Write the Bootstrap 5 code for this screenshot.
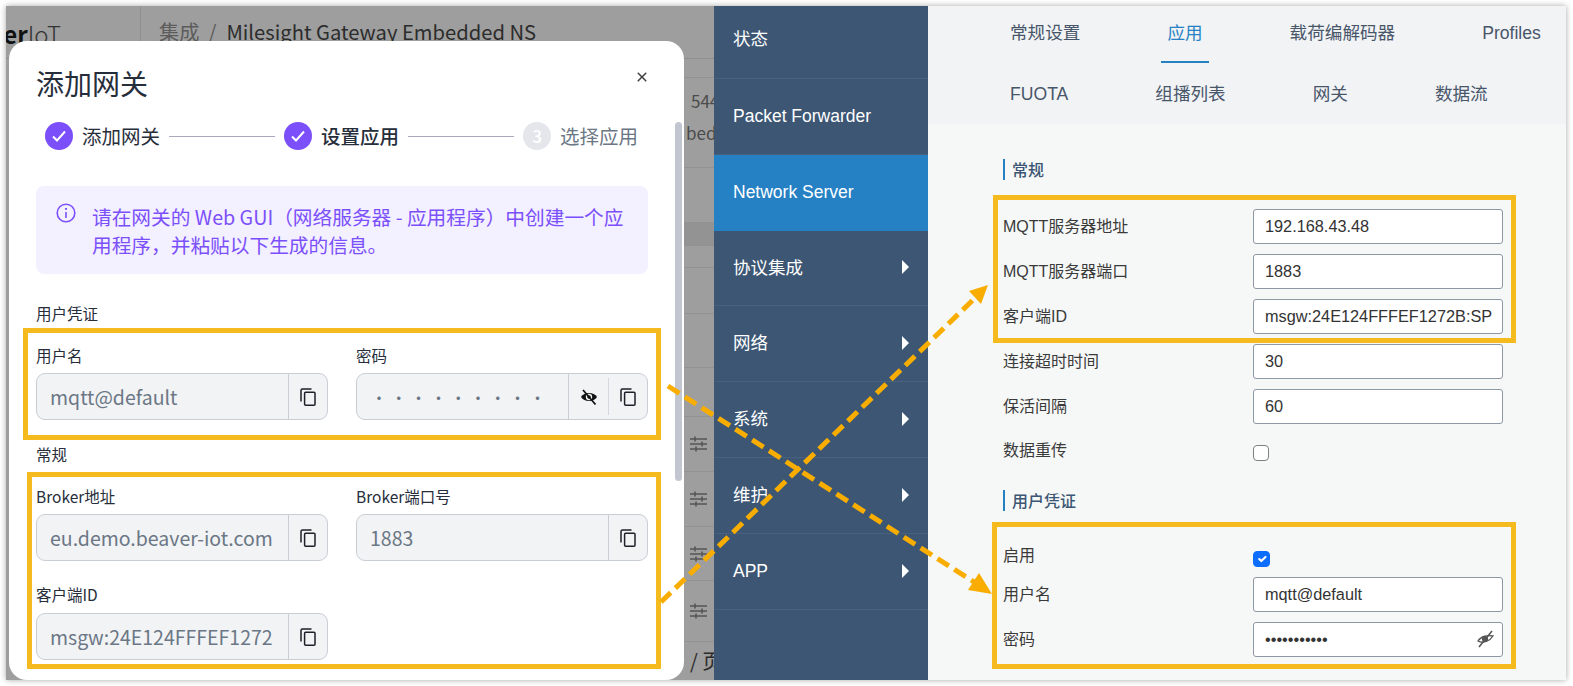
<!DOCTYPE html>
<html lang="zh-CN">
<head>
    <meta charset="UTF-8">
    <meta name="viewport" content="width=device-width, initial-scale=1.0">
    <title>Milesight Gateway Embedded NS</title>
    <link rel="stylesheet" href="https://cdn.jsdelivr.net/npm/bootstrap@5.3.0/dist/css/bootstrap.min.css">
    <style>
        html, body { height: 100%; }
        body {
            background: #fff;
            overflow: hidden;
            font-family: "Noto Sans CJK SC", sans-serif;
        }
        .shot {
            position: relative;
            width: 1560px;
            height: 674px;
            margin: 6px 0 0 6px;
            box-shadow: 0 0 6px rgba(0, 0, 0, 0.35);
        }
        .arrow-layer {
            position: absolute;
            top: 0;
            left: 0;
            z-index: 5;
            pointer-events: none;
        }

        /* left half: the dimmed page behind the dialog */
        .pane-left {
            position: relative;
            width: 708px;
            height: 674px;
            flex: none;
            overflow: hidden;
            background: #9e9e9e;
        }
        .back-top { height: 53px; border-bottom: 1px solid #8f8f8f; }
        .back-logo {
            width: 135px;
            height: 53px;
            padding: 12px 79px 0 0;
            border-right: 1px solid #8f8f8f;
            overflow: hidden;
            white-space: nowrap;
            font-size: 24px;
            line-height: 32px;
            font-weight: 300;
            color: #333;
        }
        .back-logo b { color: #111; font-weight: 700; }
        .back-crumb {
            padding: 11px 0 0 18px;
            font-size: 20.2px;
            line-height: 30px;
            color: #2c2c2c;
        }
        .back-crumb span { color: #5c5c5c; margin-right: 1px; }
        .back-rows {
            display: grid;
            grid-template-rows: 19px 90px 55px 23px 22px 46px 54px 49px 55px 55px 54px 61px 38px;
            margin-left: 678px;
            width: 30px;
            font-size: 17px;
            color: #4b4b4b;
            white-space: nowrap;
        }
        .back-rows > div {
            border-bottom: 1px solid #929292;
            overflow: hidden;
            display: flex;
            align-items: center;
            padding-left: 6px;
        }
        .back-rows > .back-band { background: #939393; }
        .back-rows > .back-num { display: block; padding: 7px 0 0 7px; line-height: 32px; }
        .back-num span { margin-left: -5px; }
        .back-rows > .back-last { border: 0; font-size: 20px; color: #2c2c2c; }

        /* dialog */
        .dlg {
            position: absolute;
            top: 35px;
            left: 3px;
            width: 675px;
            height: 639px;
            border: 0;
            border-radius: 18px;
            overflow: hidden;
            background: #fff;
            color: #272e3b;
        }
        .dlg-head { padding: 23px 36px 0 27px; }
        .dlg-title { font-size: 28px; line-height: 38px; font-weight: 400; margin: 0; color: #272e3b; }
        .dlg-close { width: 12px; height: 12px; padding: 0; margin: 7px 0 0 0; background-size: 12px; opacity: .75; }
        .dlg-bar {
            position: absolute;
            top: 81px;
            right: 2px;
            width: 7px;
            height: 359px;
            border-radius: 4px;
            background: #c2c6d0;
        }
        .dlg-body { padding: 0 0 0 27px; width: 639px; }
        .steps { margin: 20px 0 36px 9px; height: 28px; width: 593px; font-size: 19.5px; line-height: 28px; }
        .step-dot {
            width: 28px;
            height: 28px;
            flex: none;
            border-radius: 50%;
            background: #7b4ffa;
        }
        .step-dot-off {
            background: #e5e6eb;
            color: #fff;
            font-size: 17px;
            font-weight: 500;
        }
        .step-text { margin-left: 9px; white-space: nowrap; }
        .step-text-now { font-weight: 500; }
        .step-text-off { color: #6b7785; }
        .step-line { flex: 1 1 auto; height: 1px; margin: 0 9px; background: #a9a9bd; }
        .info-box {
            display: flex;
            gap: 16px;
            width: 612px;
            margin: 0;
            padding: 17px 20px 15px;
            border: 0;
            border-radius: 8px;
            background: #f3f0ff;
            color: #7b4ffa;
            font-size: 19.7px;
            line-height: 28px;
        }
        .info-box svg { flex: none; }
        .group-title { font-size: 15.5px; line-height: 22px; color: #272e3b; margin: 0; }
        .hl { border: 5px solid #f5ba1e; }
        .hl-one { width: 638px; margin: 4px 0 3px -13px; padding: 11px 8px 15px 8px; }
        .hl-two { width: 634px; margin: 7px 0 0 -9px; padding: 8px 8px 4px 4px; }
        .cred-row { --bs-gutter-x: 28px; --bs-gutter-y: 0; }
        .fld-label { display: block; font-size: 15.5px; line-height: 22px; margin: 0 0 7px; color: #272e3b; }
        .fld-label-next { margin: 22px 0 8px; }
        .fld-group { height: 47px; }
        .fld-group .form-control {
            height: 47px;
            padding: 0 4px 0 13px;
            font-family: inherit;
            font-size: 19.5px;
            color: #6b7785;
            background: #f2f3f5;
            border-color: #c9cdd4;
            border-radius: 9px;
            box-shadow: none;
        }
        .fld-group .dots { letter-spacing: 3.8px; padding-left: 14px; font-size: 16px; }
        .fld-group .btn {
            width: 40px;
            padding: 0;
            background: #f2f3f5;
            border-color: #c9cdd4;
            border-radius: 9px;
            display: flex;
            align-items: center;
            justify-content: center;
        }
        .fld-group .btn-mid { border-right: 0; border-radius: 0; }
        .fld-group .btn-end { position: relative; border-left: 0; margin-left: 0 !important; }
        .fld-group .btn-end::before {
            content: "";
            position: absolute;
            left: 0;
            top: 4px;
            bottom: 4px;
            width: 1px;
            background: #d4d7dd;
        }

        /* right half: gateway web gui */
        .side {
            --bs-list-group-border-radius: 0;
            width: 214px;
            flex: none;
            border-radius: 0;
            background: #3c5674;
            color: #fff;
            font-family: "Liberation Sans", "Noto Sans CJK SC", sans-serif;
            font-size: 17.5px;
        }
        .side .side-item {
            height: 76px;
            padding: 0 19px;
            border: 0;
            border-bottom: 1px solid #47617f;
            border-radius: 0;
            background: transparent;
            color: #fff;
        }
        .side .side-item:first-child { height: 73px; padding-bottom: 6px; }
        .side .side-item.active { margin-top: 0; background: #2581c3; color: #fff; border-color: #2581c3; }
        .side .side-item.active + .side-item { height: 75px; }
        .side-tri {
            width: 0;
            height: 0;
            margin-bottom: 2px;
            border-left: 7px solid #fff;
            border-top: 7px solid transparent;
            border-bottom: 7px solid transparent;
        }
        .gui {
            flex: 1 1 auto;
            background: #f6f8f7;
            font-family: "Liberation Sans", "Noto Sans CJK SC", sans-serif;
            color: #3a3a3a;
        }
        .tabs-bar {
            height: 118px;
            padding-left: 76px;
            background: #f1f3f5;
            column-gap: 75px;
            row-gap: 4px;
            align-content: flex-start;
        }
        .tab-link {
            height: 57px;
            padding: 0 6px;
            font-size: 17.6px;
            line-height: 55px;
            color: #48566a;
            border-bottom: 2px solid transparent;
        }
        .tab-link.active { color: #2581c3; border-bottom-color: #2581c3; }
        .gui-form { padding: 35px 0 0 75px; }
        .sec-title {
            height: 21px;
            padding-left: 7px;
            border-left: 2px solid #2581c3;
            font-size: 16px;
            line-height: 23px;
            font-weight: 500;
            color: #3c5674;
        }
        .hl-three { width: 523px; margin: 15px 0 1px -10px; padding: 9px 8px 4px 5px; }
        .hl-four { width: 524px; margin: 11px 0 0 -11px; padding: 24px 8px 7px 6px; }
        .gui-row { height: 35px; margin-bottom: 10px; }
        .gui-row-last { margin-bottom: 0; }
        .gui-label { width: 250px; flex: none; font-size: 16px; line-height: 35px; }
        .gui-input {
            position: relative;
            width: 250px;
            height: 35px;
            padding: 0 2px 0 11px;
            font-family: inherit;
            font-size: 16.3px;
            color: #333;
            background: #fff;
            border: 1px solid #8c98a4;
            border-radius: 3px;
        }
        .gui-pass { position: relative; width: 250px; }
        .gui-eye { position: absolute; right: 8px; top: 8px; }
        .gui-check-row { height: 16px; margin: 21px 0 29px; }
        .gui-check-row .gui-label { line-height: 16px; margin-top: -2px; }
        .gui-check {
            width: 16px;
            height: 16px;
            margin: 0;
            border: 1px solid #7f7f7f;
            border-radius: 3px;
        }
        .gui-check-on { margin-bottom: 10px; height: 16px; }
        .gui-check-on .gui-label { line-height: 16px; margin-top: -3px; }
        .gui-check-on .gui-check { width: 17px; }
    </style>
</head>
<body>

    <div class="shot d-flex">

        <div class="pane-left">
            <div class="back-top d-flex">
                <div class="back-logo d-flex justify-content-end"><b>er</b>IoT</div>
                <div class="back-crumb"><span>集成 &nbsp;/&nbsp;</span> Milesight Gateway Embedded NS</div>
            </div>
            <div class="back-rows">
                <div></div>
                <div class="back-num">544<br><span>bedded</span></div>
                <div></div>
                <div class="back-band"></div>
                <div></div>
                <div></div>
                <div></div>
                <div></div>
                <div><svg width="17" height="16" viewBox="0 0 17 16" fill="none" stroke="#555" stroke-width="1.6"><path d="M0 3h17M0 8h17M0 13h17M5 0.5v5M12 5.5v5M6 10.5v5"/></svg></div>
                <div><svg width="17" height="16" viewBox="0 0 17 16" fill="none" stroke="#555" stroke-width="1.6"><path d="M0 3h17M0 8h17M0 13h17M5 0.5v5M12 5.5v5M6 10.5v5"/></svg></div>
                <div><svg width="17" height="16" viewBox="0 0 17 16" fill="none" stroke="#555" stroke-width="1.6"><path d="M0 3h17M0 8h17M0 13h17M5 0.5v5M12 5.5v5M6 10.5v5"/></svg></div>
                <div><svg width="17" height="16" viewBox="0 0 17 16" fill="none" stroke="#555" stroke-width="1.6"><path d="M0 3h17M0 8h17M0 13h17M5 0.5v5M12 5.5v5M6 10.5v5"/></svg></div>
                <div class="back-last">/ 页</div>
            </div>

            <div class="modal-content dlg">
                <div class="dlg-head d-flex justify-content-between align-items-start">
                    <h5 class="dlg-title">添加网关</h5>
                    <button type="button" class="btn-close dlg-close" aria-label="Close"></button>
                </div>
                <div class="dlg-bar"></div>
                <div class="dlg-body">
                    <div class="steps d-flex align-items-center">
                        <span class="step-dot d-flex align-items-center justify-content-center">
                            <svg width="16" height="16" viewBox="0 0 16 16" fill="none" stroke="#fff" stroke-width="2"><path d="M2 8.5l4 4 8-9"/></svg>
                        </span>
                        <span class="step-text">添加网关</span>
                        <span class="step-line"></span>
                        <span class="step-dot d-flex align-items-center justify-content-center">
                            <svg width="16" height="16" viewBox="0 0 16 16" fill="none" stroke="#fff" stroke-width="2"><path d="M2 8.5l4 4 8-9"/></svg>
                        </span>
                        <span class="step-text step-text-now">设置应用</span>
                        <span class="step-line"></span>
                        <span class="step-dot step-dot-off d-flex align-items-center justify-content-center">3</span>
                        <span class="step-text step-text-off">选择应用</span>
                    </div>

                    <div class="alert info-box" role="alert">
                        <svg width="20" height="20" viewBox="0 0 20 20" fill="none" stroke="#7b4ffa" stroke-width="1.6"><circle cx="10" cy="10" r="8.8"/><path d="M10 9v6"/><path d="M10 5v1.8" stroke-width="2"/></svg>
                        <div>请在网关的 Web GUI（网络服务器 - 应用程序）中创建一个应用程序，并粘贴以下生成的信息。</div>
                    </div>

                    <p class="group-title mt-4 pt-1">用户凭证</p>
                    <div class="hl hl-one">
                        <div class="row cred-row">
                            <div class="col-6">
                                <label class="fld-label">用户名</label>
                                <div class="input-group fld-group">
                                    <input class="form-control" type="text" value="mqtt@default" readonly>
                                    <button class="btn" type="button">
                                        <svg width="16" height="18" viewBox="0 0 16 18" fill="none" stroke="#1d2129" stroke-width="1.5"><rect x="4.6" y="4.2" width="10.4" height="13" rx="1"/><path d="M1 13.5V2.5A1.5 1.5 0 0 1 2.5 1H11.5"/></svg>
                                    </button>
                                </div>
                            </div>
                            <div class="col-6">
                                <label class="fld-label">密码</label>
                                <div class="input-group fld-group">
                                    <input class="form-control dots" type="password" value="123456789" readonly>
                                    <button class="btn btn-mid" type="button">
                                        <svg width="18" height="18" viewBox="0 0 18 18"><path d="M1 9C4 3.6 14 3.6 17 9C14 14.4 4 14.4 1 9Z" fill="#111"/><circle cx="9" cy="9" r="3.2" fill="#f2f3f5"/><circle cx="9" cy="9" r="1.8" fill="#111"/><path d="M3 2L15.5 16.5" stroke="#111" stroke-width="1.8"/></svg>
                                    </button>
                                    <button class="btn btn-end" type="button">
                                        <svg width="16" height="18" viewBox="0 0 16 18" fill="none" stroke="#1d2129" stroke-width="1.5"><rect x="4.6" y="4.2" width="10.4" height="13" rx="1"/><path d="M1 13.5V2.5A1.5 1.5 0 0 1 2.5 1H11.5"/></svg>
                                    </button>
                                </div>
                            </div>
                        </div>
                    </div>

                    <p class="group-title">常规</p>
                    <div class="hl hl-two">
                        <div class="row cred-row">
                            <div class="col-6">
                                <label class="fld-label">Broker地址</label>
                                <div class="input-group fld-group">
                                    <input class="form-control" type="text" value="eu.demo.beaver-iot.com" readonly>
                                    <button class="btn" type="button">
                                        <svg width="16" height="18" viewBox="0 0 16 18" fill="none" stroke="#1d2129" stroke-width="1.5"><rect x="4.6" y="4.2" width="10.4" height="13" rx="1"/><path d="M1 13.5V2.5A1.5 1.5 0 0 1 2.5 1H11.5"/></svg>
                                    </button>
                                </div>
                            </div>
                            <div class="col-6">
                                <label class="fld-label">Broker端口号</label>
                                <div class="input-group fld-group">
                                    <input class="form-control" type="text" value="1883" readonly>
                                    <button class="btn" type="button">
                                        <svg width="16" height="18" viewBox="0 0 16 18" fill="none" stroke="#1d2129" stroke-width="1.5"><rect x="4.6" y="4.2" width="10.4" height="13" rx="1"/><path d="M1 13.5V2.5A1.5 1.5 0 0 1 2.5 1H11.5"/></svg>
                                    </button>
                                </div>
                            </div>
                            <div class="col-6">
                                <label class="fld-label fld-label-next">客户端ID</label>
                                <div class="input-group fld-group">
                                    <input class="form-control" type="text" value="msgw:24E124FFFEF1272" readonly>
                                    <button class="btn" type="button">
                                        <svg width="16" height="18" viewBox="0 0 16 18" fill="none" stroke="#1d2129" stroke-width="1.5"><rect x="4.6" y="4.2" width="10.4" height="13" rx="1"/><path d="M1 13.5V2.5A1.5 1.5 0 0 1 2.5 1H11.5"/></svg>
                                    </button>
                                </div>
                            </div>
                        </div>
                    </div>
                </div>
            </div>
        </div>

        <div class="side list-group">
            <a class="list-group-item side-item d-flex align-items-center" href="#">状态</a>
            <a class="list-group-item side-item d-flex align-items-center" href="#">Packet Forwarder</a>
            <a class="list-group-item side-item active d-flex align-items-center" href="#">Network Server</a>
            <a class="list-group-item side-item d-flex align-items-center justify-content-between" href="#">协议集成<span class="side-tri"></span></a>
            <a class="list-group-item side-item d-flex align-items-center justify-content-between" href="#">网络<span class="side-tri"></span></a>
            <a class="list-group-item side-item d-flex align-items-center justify-content-between" href="#">系统<span class="side-tri"></span></a>
            <a class="list-group-item side-item d-flex align-items-center justify-content-between" href="#">维护<span class="side-tri"></span></a>
            <a class="list-group-item side-item d-flex align-items-center justify-content-between" href="#">APP<span class="side-tri"></span></a>
        </div>

        <div class="gui">
            <nav class="nav tabs-bar">
                <a class="nav-link tab-link" href="#">常规设置</a>
                <a class="nav-link tab-link active" href="#">应用</a>
                <a class="nav-link tab-link" href="#">载荷编解码器</a>
                <a class="nav-link tab-link" href="#">Profiles</a>
                <a class="nav-link tab-link" href="#">FUOTA</a>
                <a class="nav-link tab-link" href="#">组播列表</a>
                <a class="nav-link tab-link" href="#">网关</a>
                <a class="nav-link tab-link" href="#">数据流</a>
            </nav>
            <form class="gui-form">
                <div class="sec-title">常规</div>
                <div class="hl hl-three">
                    <div class="gui-row d-flex"><label class="gui-label">MQTT服务器地址</label><input class="form-control gui-input" value="192.168.43.48"></div>
                    <div class="gui-row d-flex"><label class="gui-label">MQTT服务器端口</label><input class="form-control gui-input" value="1883"></div>
                    <div class="gui-row gui-row-last d-flex"><label class="gui-label">客户端ID</label><input class="form-control gui-input" value="msgw:24E124FFFEF1272B:SP"></div>
                </div>
                <div class="gui-row d-flex"><label class="gui-label">连接超时时间</label><input class="form-control gui-input" value="30"></div>
                <div class="gui-row d-flex"><label class="gui-label">保活间隔</label><input class="form-control gui-input" value="60"></div>
                <div class="gui-check-row d-flex"><label class="gui-label">数据重传</label><input class="form-check-input gui-check" type="checkbox"></div>
                <div class="sec-title">用户凭证</div>
                <div class="hl hl-four">
                    <div class="gui-check-on d-flex"><label class="gui-label">启用</label><input class="form-check-input gui-check" type="checkbox" checked></div>
                    <div class="gui-row d-flex"><label class="gui-label">用户名</label><input class="form-control gui-input" value="mqtt@default"></div>
                    <div class="gui-row gui-row-last d-flex"><label class="gui-label">密码</label>
                        <div class="gui-pass">
                            <input class="form-control gui-input" type="password" value="mqttdefault">
                            <svg class="gui-eye" width="19" height="18" viewBox="0 0 19 18" fill="none" stroke="#555" stroke-width="1.3"><path d="M2 11C5 6 12 5 17 6C14 11 7 14 2 11Z"/><circle cx="9" cy="9" r="2.4" fill="#555"/><path d="M3 17L16 1" stroke-width="1.6"/></svg>
                        </div>
                    </div>
                </div>
            </form>
        </div>

        <svg class="arrow-layer" width="1560" height="674" viewBox="6 6 1560 674">
            <g stroke="#f8ad00" stroke-width="5" stroke-dasharray="13.5 6.5" fill="none">
                <path d="M661 602L976 297"/>
                <path d="M668 386L974 582"/>
            </g>
            <polygon points="988,285 969,291 981,304" fill="#f8ad00"/>
            <polygon points="992,594 968,590 979,573" fill="#f8ad00"/>
        </svg>
    </div>

    <script src="https://cdn.jsdelivr.net/npm/bootstrap@5.3.0/dist/js/bootstrap.bundle.min.js"></script>
</body>
</html>
